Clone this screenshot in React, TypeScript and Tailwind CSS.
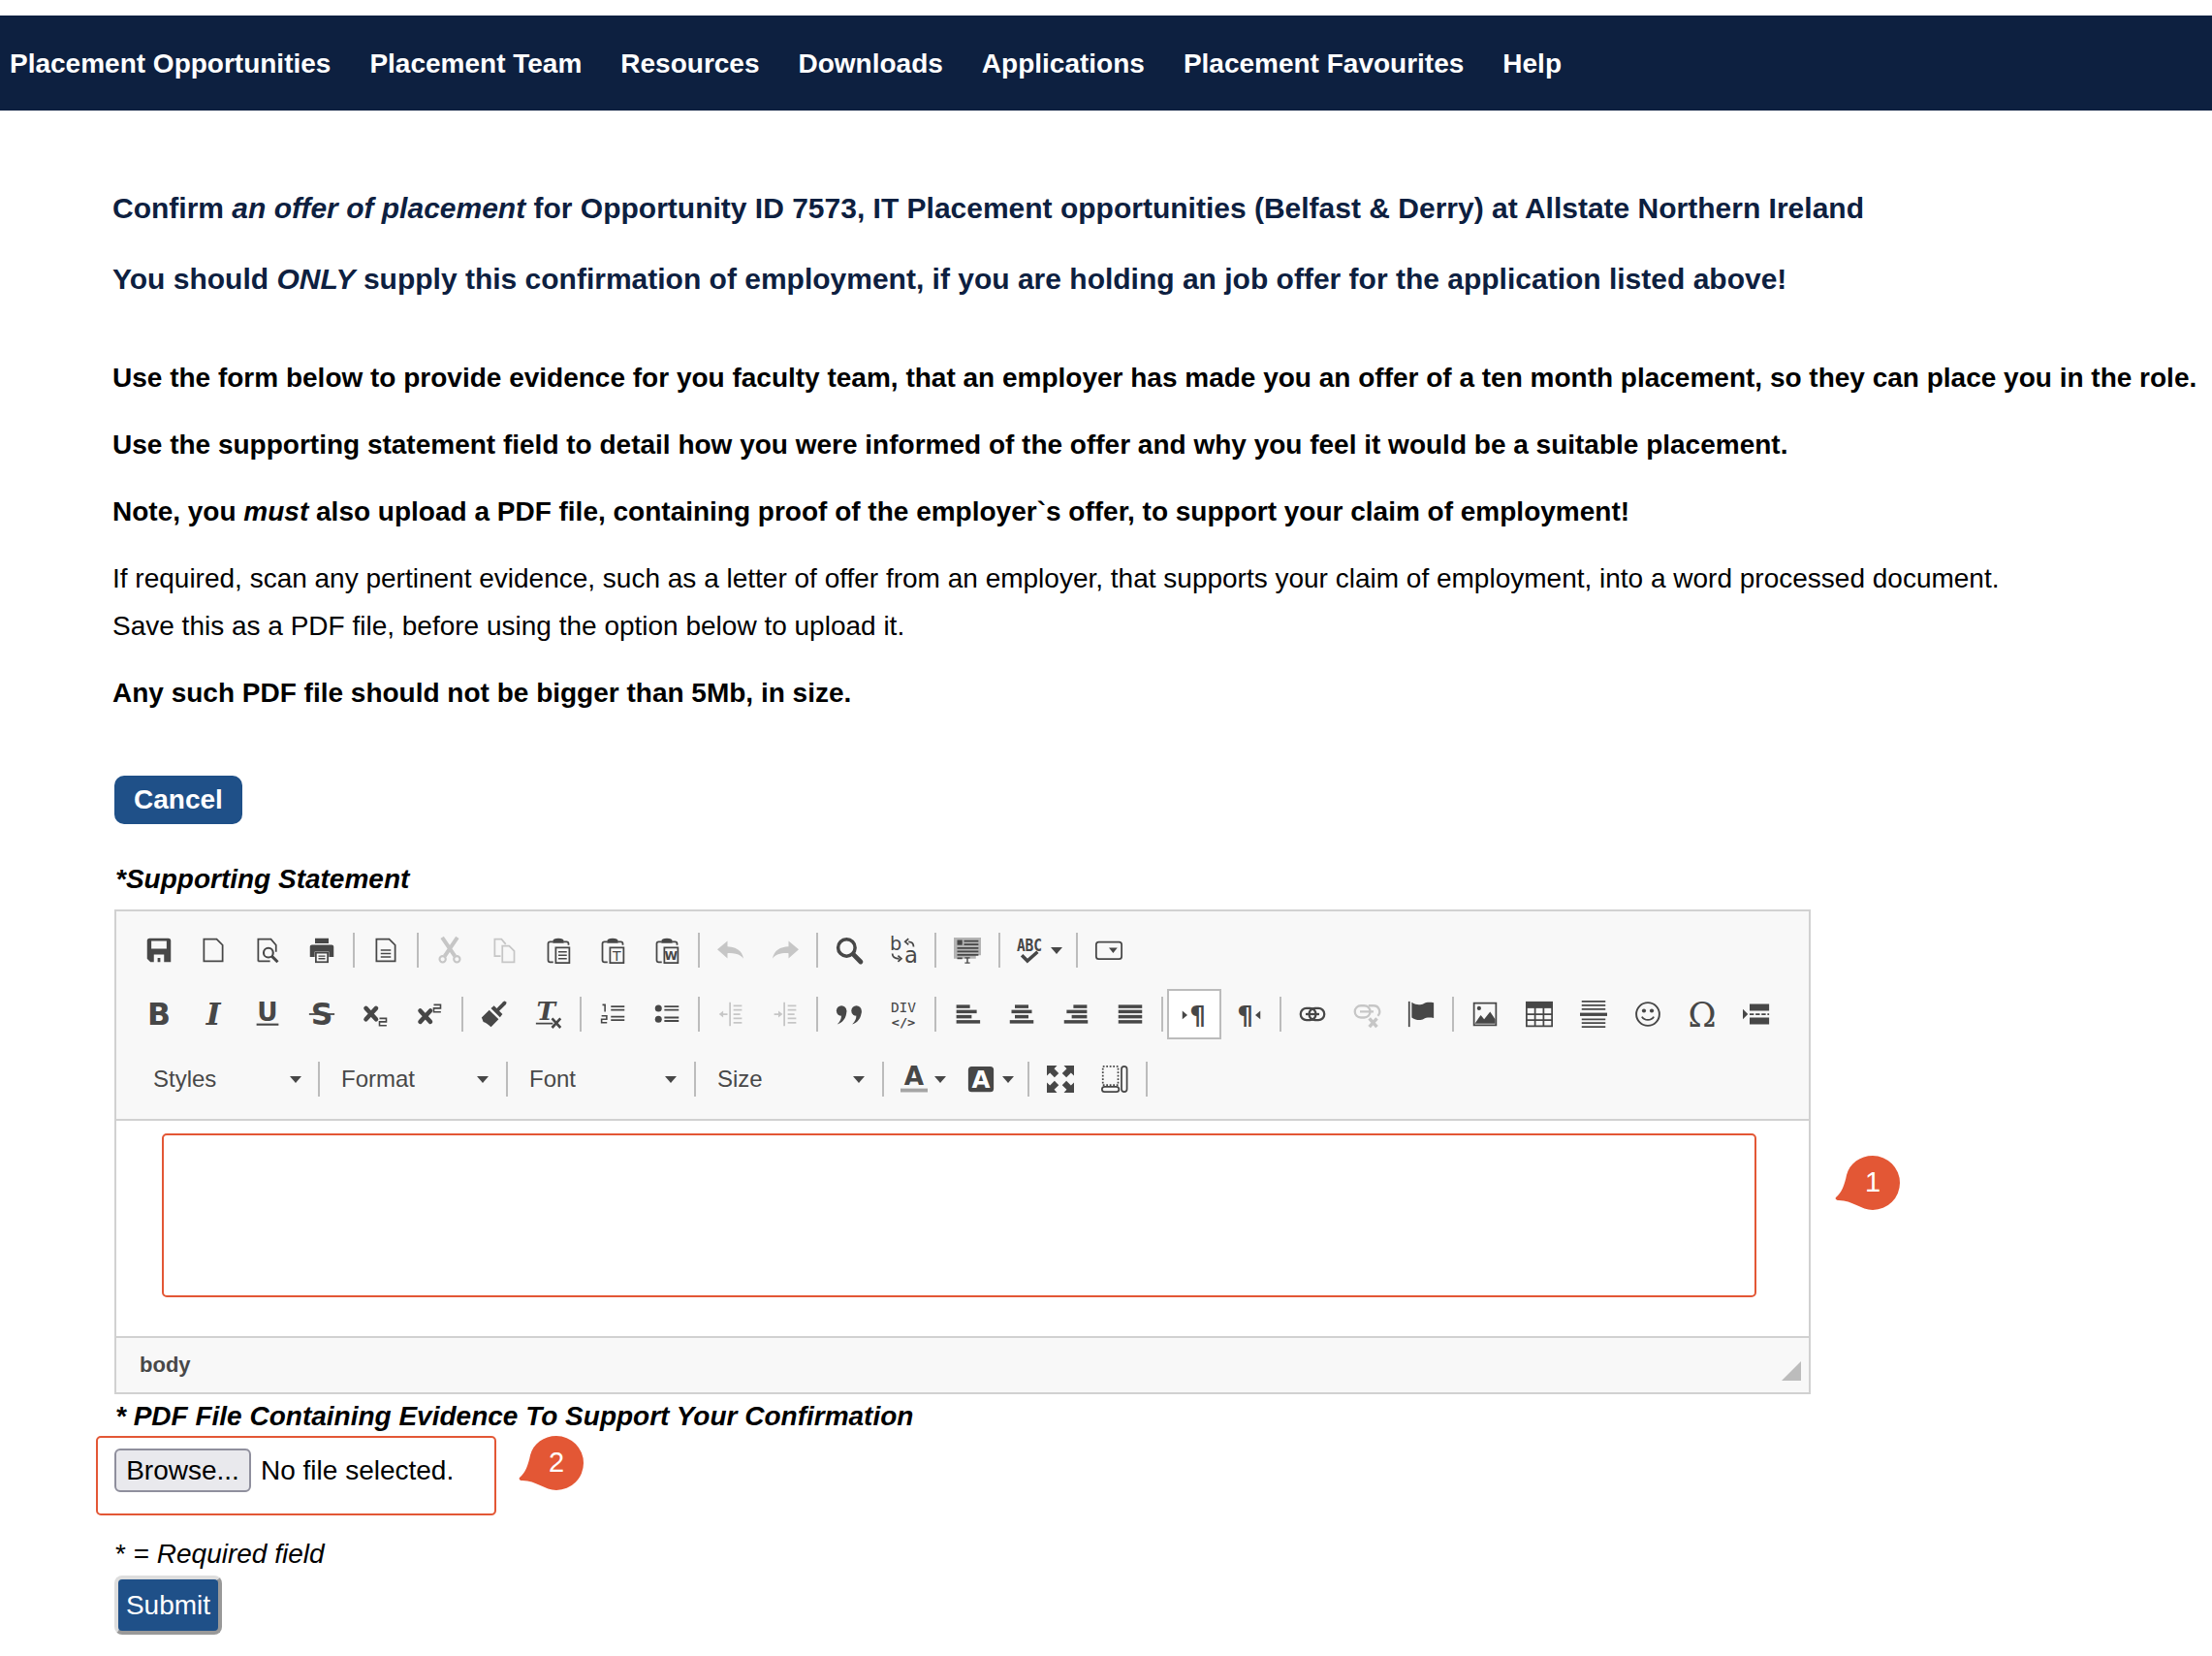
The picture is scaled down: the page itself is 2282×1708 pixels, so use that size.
import React from "react";

const Icon = ({ children, off = false }: { children: React.ReactNode; off?: boolean }) => (
  <svg
    viewBox="0 0 16 16"
    fill="currentColor"
    className={off ? "h-7 w-7 overflow-visible text-[#c6c6c6]" : "h-7 w-7 overflow-visible text-[#474747]"}
  >
    {children}
  </svg>
);

const Btn = ({ children, active = false }: { children: React.ReactNode; active?: boolean }) => (
  <div
    className={
      active
        ? "flex h-[52px] w-[56px] items-center justify-center border-2 border-[#bcbcbc] bg-white"
        : "flex h-[52px] w-[56px] items-center justify-center"
    }
  >
    {children}
  </div>
);

const Sep = () => (
  <div className="flex w-[10px] justify-center">
    <div className="h-9 w-[2px] bg-[#bcbcbc]" />
  </div>
);

const Arrow = () => (
  <svg viewBox="0 0 12 7" className="h-[7px] w-3 text-[#474747]" fill="currentColor">
    <path d="M0 0h12L6 7z" />
  </svg>
);

const Combo = ({ label, first = false }: { label: string; first?: boolean }) => (
  <div
    className={
      first
        ? "flex h-[52px] w-[188px] items-center justify-between pl-[22px] pr-[13px]"
        : "flex h-[52px] w-[184px] items-center justify-between pl-[18px] pr-[14px]"
    }
  >
    <span className="text-[24px] text-[#484848]">{label}</span>
    <Arrow />
  </div>
);

const page = "M2.5 1.5h7.5l3.5 3.5v9.5h-11z";
const sans = "'DejaVu Sans', sans-serif";
const serif = "'DejaVu Serif', serif";
const mono = "'DejaVu Sans Mono', monospace";

const Clipboard = ({ children }: { children: React.ReactNode }) => (
  <Icon>
    <path d="M5 3H3.2C2.4 3 2 3.4 2 4.2v9.6c0 .8.4 1.2 1.2 1.2H5M11 3h1.800c.8 0 1.200.4 1.200 1.200V5" fill="none" stroke="currentColor" />
    <path d="M4.800 3.800V2.600C4.800 1.500 6 1 8 1s3.200.5 3.200 1.600v1.200z" />
    <rect x="6.500" y="6.500" width="8" height="9" fill="none" stroke="currentColor" />
    {children}
  </Icon>
);

const Bars = ({ rows }: { rows: [number, number][] }) => (
  <Icon>
    {rows.map(([x, w], i) => (
      <rect key={i} x={x} y={2.5 + i * 3} width={w} height="2" />
    ))}
  </Icon>
);

const Bubble = ({ n, className }: { n: string; className: string }) => (
  <div className={"absolute h-[58px] w-[68px] " + className}>
    <svg viewBox="0 0 68 58" className="h-[58px] w-[68px] text-[#e35735]" fill="currentColor">
      <path d="M39 0a28 28 0 1 1 0 56C27 56 18 46 4 46c-3 0-4-2-3-3 6-5 9-13 11-23C15 8 26 0 39 0z" />
    </svg>
    <span className="absolute left-[11px] top-0 flex h-[56px] w-[56px] items-center justify-center text-[29px] text-white">
      {n}
    </span>
  </div>
);

const Toolbar = () => (
  <div className="border-b-2 border-[#d1d1d1] bg-[#f8f8f8] pb-[15px] pl-4 pt-[14px]">
    <div className="flex h-[52px] items-center">
      <Btn>
        <Icon>
          <path
            fillRule="evenodd"
            d="M2.500 1h11A1.500 1.500 0 0 1 15 2.500V15H3l-2-2V2.500A1.500 1.500 0 0 1 2.500 1zM3.500 2.600v4.600h9V2.600zM5 10.500V15h2.200v-2.500h1.600V15H11v-4.500z"
          />
        </Icon>
      </Btn>
      <Btn>
        <Icon>
          <path d={page} fill="none" stroke="currentColor" />
        </Icon>
      </Btn>
      <Btn>
        <Icon>
          <path d="M2.500 14.500v-13h7.500l3 3.500v4M2.500 14.500h7" fill="none" stroke="currentColor" />
          <circle cx="8.500" cy="9.500" r="2.800" fill="none" stroke="currentColor" strokeWidth="1.200" />
          <path d="M10.500 11.500l3.500 3.500" stroke="currentColor" strokeWidth="1.700" />
        </Icon>
      </Btn>
      <Btn>
        <Icon>
          <path d="M4 1h8v3H4z" />
          <path d="M2.200 4.800h11.600c.7 0 1.200.5 1.200 1.200v6h-2.800V8.800H3.800V12H1V6c0-.7.5-1.200 1.200-1.200z" />
          <rect x="4.500" y="9.500" width="7" height="5.500" fill="none" stroke="currentColor" />
          <path d="M6 11.500h4M6 13h4" stroke="currentColor" strokeWidth=".8" />
        </Icon>
      </Btn>
      <Sep />
      <Btn>
        <Icon>
          <path d={page} fill="none" stroke="currentColor" />
          <path d="M5 8h6M5 10h6M5 12h6" stroke="currentColor" strokeWidth=".9" />
        </Icon>
      </Btn>
      <Sep />
      <Btn>
        <Icon off>
          <path d="M5 11.500L12.500 .5M11 11.500L3.500 .5" stroke="currentColor" strokeWidth="2.300" />
          <circle cx="3.800" cy="13.300" r="1.800" fill="none" stroke="currentColor" strokeWidth="1.200" />
          <circle cx="12.200" cy="13.300" r="1.800" fill="none" stroke="currentColor" strokeWidth="1.200" />
        </Icon>
      </Btn>
      <Btn>
        <Icon off>
          <path d="M6 11.500H2.500v-10h4l2.500 3M7 5.500h4l3 3v6.500H7z" fill="none" stroke="currentColor" />
        </Icon>
      </Btn>
      <Btn>
        <Clipboard>
          <path d="M8 9h5M8 11h5M8 13h5" stroke="currentColor" strokeWidth=".9" />
        </Clipboard>
      </Btn>
      <Btn>
        <Clipboard>
          <text x="10.500" y="14" textAnchor="middle" fontSize="8" fontFamily={sans}>T</text>
        </Clipboard>
      </Btn>
      <Btn>
        <Clipboard>
          <text x="10.500" y="13.800" textAnchor="middle" fontSize="7" fontWeight="700" fontFamily={sans}>W</text>
        </Clipboard>
      </Btn>
      <Sep />
      <Btn>
        <Icon off>
          <path d="M0 7.500L6 2.500v3.300C11 6 14.500 8 15.500 13c-2-2.500-5-3.400-9.500-3.200v3z" />
        </Icon>
      </Btn>
      <Btn>
        <Icon off>
          <path d="M16 7.500L10 2.500v3.300C5 6 1.500 8 .5 13c2-2.500 5-3.400 9.500-3.200v3z" />
        </Icon>
      </Btn>
      <Sep />
      <Btn>
        <Icon>
          <circle cx="6.500" cy="6.500" r="5" fill="none" stroke="currentColor" strokeWidth="2" />
          <path d="M10.500 10.500l4.300 4.300" stroke="currentColor" strokeWidth="2.800" strokeLinecap="round" />
        </Icon>
      </Btn>
      <Btn>
        <Icon>
          <text x="0" y="8" fontSize="11" fontFamily={sans}>b</text>
          <text x="8.500" y="15.500" fontSize="13" fontFamily={sans}>a</text>
          <path d="M14 6c0-2-1-3-3-3M11 1.200L9 3l2 1.800M1.500 10c0 2 1 3 4 3M4.800 11.200l2 1.800-2 1.800" fill="none" stroke="currentColor" />
        </Icon>
      </Btn>
      <Sep />
      <Btn>
        <Icon>
          <path d="M0 .5h16v10.500h-3V13H0z" fill="#b4b4b4" />
          <path d="M2 2h3v3H2z" />
          <path d="M6 2.700h8.500M6 4.700h8.500M2 6.800h12.500M2 8.800h12.500M2 10.800h12.500M2 12.800h3" stroke="currentColor" strokeWidth="1" />
          <path d="M6.500 12.500h3M8 12.500v3M6.500 15.500h3" stroke="currentColor" strokeWidth=".8" />
        </Icon>
      </Btn>
      <Sep />
      <div className="flex h-[52px] w-[70px] items-center pl-3">
        <Icon>
          <text x="8" y="8.500" textAnchor="middle" fontSize="10.500" fontWeight="700" fontFamily={mono} textLength="15" lengthAdjust="spacingAndGlyphs">ABC</text>
          <path d="M3.500 11l3.300 3.300L12.800 9" fill="none" stroke="currentColor" strokeWidth="2" />
        </Icon>
        <span className="ml-2 flex">
          <Arrow />
        </span>
      </div>
      <Sep />
      <Btn>
        <Icon>
          <rect x="0.500" y="3.200" width="15" height="10" rx="1.500" fill="none" stroke="currentColor" />
          <path d="M8 6.500h5l-2.500 3.200z" />
        </Icon>
      </Btn>
    </div>

    <div className="mt-[14px] flex h-[52px] items-center">
      <Btn>
        <Icon>
          <text x="8" y="14.500" textAnchor="middle" fontSize="18" fontWeight="700" fontFamily={sans}>B</text>
        </Icon>
      </Btn>
      <Btn>
        <Icon>
          <text x="8" y="14.500" textAnchor="middle" fontSize="18" fontWeight="700" fontStyle="italic" fontFamily={serif}>I</text>
        </Icon>
      </Btn>
      <Btn>
        <Icon>
          <text x="8" y="12" textAnchor="middle" fontSize="15" fontWeight="700" fontFamily={sans}>U</text>
          <rect x="1.500" y="13.500" width="13" height="1.200" />
        </Icon>
      </Btn>
      <Btn>
        <Icon>
          <text x="8" y="14.500" textAnchor="middle" fontSize="18" fontWeight="700" fontFamily={sans}>S</text>
          <rect x="0.500" y="7.500" width="15" height="1" />
        </Icon>
      </Btn>
      <Btn>
        <Icon>
          <path d="M2 4.500l6 6.500M8 4.500l-6 6.500" stroke="currentColor" strokeWidth="2.600" strokeLinecap="round" />
          <path d="M10 10.500h4v2h-4v2.200h4.200" fill="none" stroke="currentColor" strokeWidth=".9" />
        </Icon>
      </Btn>
      <Btn>
        <Icon>
          <path d="M2 6l6 6.500M8 6l-6 6.500" stroke="currentColor" strokeWidth="2.600" strokeLinecap="round" />
          <path d="M10 2.500h4v2h-4v2.200h4.200" fill="none" stroke="currentColor" strokeWidth=".9" />
        </Icon>
      </Btn>
      <Sep />
      <Btn>
        <Icon>
          <path d="M.5 10L5 5.500l5.500 5.500-4.500 4.500C4.500 14 3 13 1.500 12.500z" />
          <path d="M6 4.500L7.800 3l5 5L11.300 9.800z" />
          <path d="M9.500 6L14 1.500" stroke="currentColor" strokeWidth="2.200" strokeLinecap="round" />
        </Icon>
      </Btn>
      <Btn>
        <Icon>
          <text x="6.500" y="11.500" textAnchor="middle" fontSize="15" fontWeight="700" fontStyle="italic" fontFamily={serif}>T</text>
          <rect x="0.500" y="13" width="10" height="1" />
          <path d="M10 10.500l5 5.500M15 10.500L10 16" stroke="currentColor" strokeWidth="1.500" />
        </Icon>
      </Btn>
      <Sep />
      <Btn>
        <Icon>
          <path d="M2 2.500h1.500v4M1.500 9h3v2h-3v2h3.200" fill="none" stroke="currentColor" strokeWidth=".9" />
          <path d="M7 3.500h8M7 5.500h8M7 9.500h8M7 11.500h8" stroke="currentColor" strokeWidth="1" />
        </Icon>
      </Btn>
      <Btn>
        <Icon>
          <circle cx="3" cy="4.500" r="2" />
          <circle cx="3" cy="11" r="2" />
          <path d="M6.500 3.500H15M6.500 5.500H15M6.500 10H15M6.500 12H15" stroke="currentColor" strokeWidth="1.100" />
        </Icon>
      </Btn>
      <Sep />
      <Btn>
        <Icon off>
          <path d="M7.500 1v14" stroke="currentColor" strokeWidth="1" />
          <path d="M9.500 3h5M9.500 5.500h5M9.500 8h4M9.500 10.500h5M9.500 13h5M2 8h4" stroke="currentColor" strokeWidth="1" />
          <path d="M1 8l2.500-2v4z" />
        </Icon>
      </Btn>
      <Btn>
        <Icon off>
          <path d="M7.500 1v14" stroke="currentColor" strokeWidth="1" />
          <path d="M9.500 3h5M9.500 5.500h5M9.500 8h4M9.500 10.500h5M9.500 13h5M1.500 8h4" stroke="currentColor" strokeWidth="1" />
          <path d="M6.500 8L4 6v4z" />
        </Icon>
      </Btn>
      <Sep />
      <Btn>
        <Icon>
          <circle cx="3.500" cy="6" r="3" />
          <path d="M6.500 6c0 4.500-2.500 7-5.500 8 1.800-1.800 2.400-3.300 2.400-5.200z" />
          <circle cx="12.300" cy="6" r="3" />
          <path d="M15.300 6c0 4.500-2.500 7-5.500 8 1.800-1.800 2.400-3.300 2.400-5.200z" />
        </Icon>
      </Btn>
      <Btn>
        <Icon>
          <text x="8" y="7" textAnchor="middle" fontSize="8.500" fontFamily={mono} textLength="15" lengthAdjust="spacingAndGlyphs">DIV</text>
          <text x="8" y="15.500" textAnchor="middle" fontSize="7" fontWeight="700" fontFamily={mono} textLength="14" lengthAdjust="spacingAndGlyphs">{"</>"}</text>
        </Icon>
      </Btn>
      <Sep />
      <Btn>
        <Bars rows={[[1.500, 8], [1.500, 12], [1.500, 9], [1.500, 14]]} />
      </Btn>
      <Btn>
        <Bars rows={[[4, 8], [2, 12], [4, 8], [1, 14]]} />
      </Btn>
      <Btn>
        <Bars rows={[[6.500, 8], [2.500, 12], [5.500, 9], [1, 14]]} />
      </Btn>
      <Btn>
        <Bars rows={[[1, 14], [1, 14], [1, 14], [1, 14]]} />
      </Btn>
      <Sep />
      <Btn active>
        <Icon>
          <text x="10" y="14" textAnchor="middle" fontSize="15" fontWeight="700" fontFamily={sans}>¶</text>
          <path d="M1 6l3 2.500L1 11z" />
        </Icon>
      </Btn>
      <Btn>
        <Icon>
          <text x="6" y="14" textAnchor="middle" fontSize="15" fontWeight="700" fontFamily={sans}>¶</text>
          <path d="M15 6l-3 2.500 3 2.500z" />
        </Icon>
      </Btn>
      <Sep />
      <Btn>
        <Icon>
          <rect x="1" y="4.500" width="9" height="7" rx="3.500" fill="none" stroke="currentColor" strokeWidth="1.300" />
          <rect x="6" y="4.500" width="9" height="7" rx="3.500" fill="none" stroke="currentColor" strokeWidth="1.300" />
          <path d="M4 8h8" stroke="currentColor" strokeWidth="1.300" />
        </Icon>
      </Btn>
      <Btn>
        <Icon off>
          <rect x="1" y="3" width="9" height="7" rx="3.500" fill="none" stroke="currentColor" strokeWidth="1.300" />
          <path d="M9 3h3a3.500 3.500 0 0 1 2.500 6M4 6.500h8" fill="none" stroke="currentColor" strokeWidth="1.300" />
          <path d="M9.500 10.500l4.500 5M14 10.500l-4.500 5" stroke="currentColor" strokeWidth="2" />
        </Icon>
      </Btn>
      <Btn>
        <Icon>
          <path d="M1 .5v15" stroke="currentColor" strokeWidth="1" />
          <path d="M2.500 1c3 2 5.500 1.500 7 .8 1.500-.8 3.500-1 6-.5v9c-2.500-.5-4.500-.3-6 .5s-4 1.200-7-.8z" />
        </Icon>
      </Btn>
      <Sep />
      <Btn>
        <Icon>
          <rect x="1.500" y="1.500" width="13" height="13" fill="none" stroke="currentColor" />
          <circle cx="4.500" cy="4.500" r="1.200" />
          <path d="M2 13.500l3.500-5 2 2.500 3.500-4.500 3 4.500v2.500z" />
        </Icon>
      </Btn>
      <Btn>
        <Icon>
          <rect x="0" y="0.500" width="16" height="4" />
          <path d="M.5 4v11h15V4M5.500 4v11M10.500 4v11M.5 8h15M.5 11.500h15" fill="none" stroke="currentColor" />
        </Icon>
      </Btn>
      <Btn>
        <Icon>
          <path d="M1 .5h14M1 2.800h14M1 5h14M1 11h14M1 13.200h14M1 15.500h14" stroke="currentColor" strokeWidth="1" />
          <rect x="0" y="7.200" width="16" height="1.900" />
        </Icon>
      </Btn>
      <Btn>
        <Icon>
          <circle cx="8" cy="8" r="6.800" fill="none" stroke="currentColor" strokeWidth="1.100" />
          <circle cx="5.700" cy="6" r="1.200" />
          <circle cx="10.300" cy="6" r="1.200" />
          <path d="M4.500 9.500c1.500 2.500 5.500 2.500 7 0" fill="none" stroke="currentColor" strokeWidth="1.100" />
        </Icon>
      </Btn>
      <Btn>
        <Icon>
          <text x="8" y="15.500" textAnchor="middle" fontSize="20" fontFamily={serif}>Ω</text>
        </Icon>
      </Btn>
      <Btn>
        <Icon>
          <path d="M0 5l3 3-3 3z" />
          <rect x="4" y="2" width="11.500" height="4" />
          <rect x="4" y="10" width="11.500" height="4" />
          <path d="M4 8h11.500" stroke="currentColor" strokeWidth="1" strokeDasharray="2.500 1" />
        </Icon>
      </Btn>
    </div>

    <div className="mt-[15px] flex h-[52px] items-center">
      <Combo label="Styles" first />
      <Sep />
      <Combo label="Format" />
      <Sep />
      <Combo label="Font" />
      <Sep />
      <Combo label="Size" />
      <Sep />
      <div className="flex h-[52px] w-[70px] items-center pl-[13px]">
        <Icon>
          <text x="8" y="11.500" textAnchor="middle" fontSize="15" fontWeight="700" fontFamily={sans}>A</text>
          <rect x="0" y="13.500" width="16" height="2.200" fill="#a5a5a5" />
        </Icon>
        <span className="ml-[7px] flex">
          <Arrow />
        </span>
      </div>
      <div className="flex h-[52px] w-[70px] items-center pl-3">
        <Icon>
          <rect x="0.500" y="0.500" width="15" height="15" rx="2" />
          <text x="8" y="13" textAnchor="middle" fontSize="14" fontWeight="700" fontFamily={sans} fill="#fff">A</text>
        </Icon>
        <span className="ml-2 flex">
          <Arrow />
        </span>
      </div>
      <Sep />
      <Btn>
        <Icon>
          <path d="M0 0h6L4.300 1.800 7 4.500 4.500 7 1.800 4.300 0 6zM16 0v6l-1.800-1.700L11.500 7 9 4.500l2.700-2.700L10 0zM0 16v-6l1.800 1.700L4.500 9 7 11.500l-2.700 2.700L6 16zM16 16h-6l1.700-1.800L9 11.500 11.500 9l2.700 2.700L16 10z" />
        </Icon>
      </Btn>
      <Btn>
        <Icon>
          <path d="M1 .5h9v11H1z" fill="none" stroke="currentColor" strokeDasharray="1 1" />
          <rect x="12" y="0.500" width="3.200" height="15" rx="1.600" fill="none" stroke="currentColor" />
          <rect x="0.500" y="12.500" width="10" height="3" rx="1.500" fill="none" stroke="currentColor" />
        </Icon>
      </Btn>
      <Sep />
    </div>
  </div>
);

export default function App() {
  return (
    <div className="relative bg-white pb-[23px] pt-4 font-['Liberation_Sans',Arial,sans-serif] text-[28px] text-black">
      {/* Nav */}
      <nav className="flex h-[98px] items-center gap-[40px] whitespace-nowrap bg-[#0d2040] pl-[10px] pt-[1px] font-bold text-white">
        <span>Placement Opportunities</span>
        <span>Placement Team</span>
        <span>Resources</span>
        <span>Downloads</span>
        <span>Applications</span>
        <span>Placement Favourites</span>
        <span>Help</span>
      </nav>

      <div className="pl-[116px] whitespace-nowrap">
        <h1 className="mt-[81px] text-[30px] font-bold leading-[40px] text-[#0d2040]">
          Confirm <em>an offer of placement</em> for Opportunity ID 7573, IT Placement opportunities (Belfast &amp; Derry) at Allstate Northern Ireland
        </h1>
        <h2 className="mt-[33px] text-[30px] font-bold leading-[40px] text-[#0d2040]">
          You should <em>ONLY</em> supply this confirmation of employment, if you are holding an job offer for the application listed above!
        </h2>

        <div className="mt-[57px] flex flex-col gap-5 leading-[49px]">
          <p className="font-bold">
            Use the form below to provide evidence for you faculty team, that an employer has made you an offer of a ten month placement, so they can place you in the role.
          </p>
          <p className="font-bold">
            Use the supporting statement field to detail how you were informed of the offer and why you feel it would be a suitable placement.
          </p>
          <p className="font-bold">
            Note, you <em>must</em> also upload a PDF file, containing proof of the employer`s offer, to support your claim of employment!
          </p>
          <p>
            If required, scan any pertinent evidence, such as a letter of offer from an employer, that supports your claim of employment, into a word processed document.
            <br />
            Save this as a PDF file, before using the option below to upload it.
          </p>
          <p className="font-bold">Any such PDF file should not be bigger than 5Mb, in size.</p>
        </div>

        <button className="ml-[2px] mt-[61px] block h-[50px] w-[132px] rounded-[10px] bg-[#1f5088] font-bold text-white">
          Cancel
        </button>

        <p className="ml-[3px] mt-[37px] font-bold italic leading-[40px]">*Supporting Statement</p>

        {/* Editor */}
        <div className="ml-[2px] mt-[11px] w-[1750px] border-2 border-[#d1d1d1] bg-white">
          <Toolbar />
          <div className="relative h-[222px] bg-white">
            <div className="absolute left-[47px] top-[13px] h-[169px] w-[1645px] rounded-[5px] border-2 border-[#e35735]" />
          </div>
          <div className="relative flex h-[58px] items-center border-t-2 border-[#d1d1d1] bg-[#f8f8f8] pb-[2px] pl-6 text-[22px] font-bold text-[#484848]">
            body
            <svg viewBox="0 0 20 20" className="absolute right-2 top-[24px] h-5 w-5 text-[#bcbcbc]" fill="currentColor">
              <path d="M20 0v20H0z" />
            </svg>
          </div>
        </div>

        <p className="ml-[3px] mt-[3px] font-bold italic leading-[40px]">* PDF File Containing Evidence To Support Your Confirmation</p>

        <div className="relative ml-[2px] mt-[13px] flex items-center">
          <div className="absolute -left-[19px] -top-[13px] h-[82px] w-[413px] rounded-[5px] border-2 border-[#e35735]" />
          <button className="h-[45px] w-[141px] rounded-[6px] border-2 border-[#8f8f9d] bg-[#e9e9ed]">Browse...</button>
          <span className="ml-[10px]">No file selected.</span>
        </div>

        <p className="ml-[3px] mt-[44px] italic leading-[40px]">
          <span className="not-italic">* =</span> Required field
        </p>

        <button className="ml-[2px] mt-[2px] block h-[61px] w-[111px] rounded-[8px] border-4 border-b-[#999999] border-l-[#dddddd] border-r-[#999999] border-t-[#dddddd] bg-[#1f5088] text-white">
          Submit
        </button>
      </div>

      <Bubble n="1" className="left-[1893px] top-[1192px]" />
      <Bubble n="2" className="left-[535px] top-[1481px]" />
    </div>
  );
}
